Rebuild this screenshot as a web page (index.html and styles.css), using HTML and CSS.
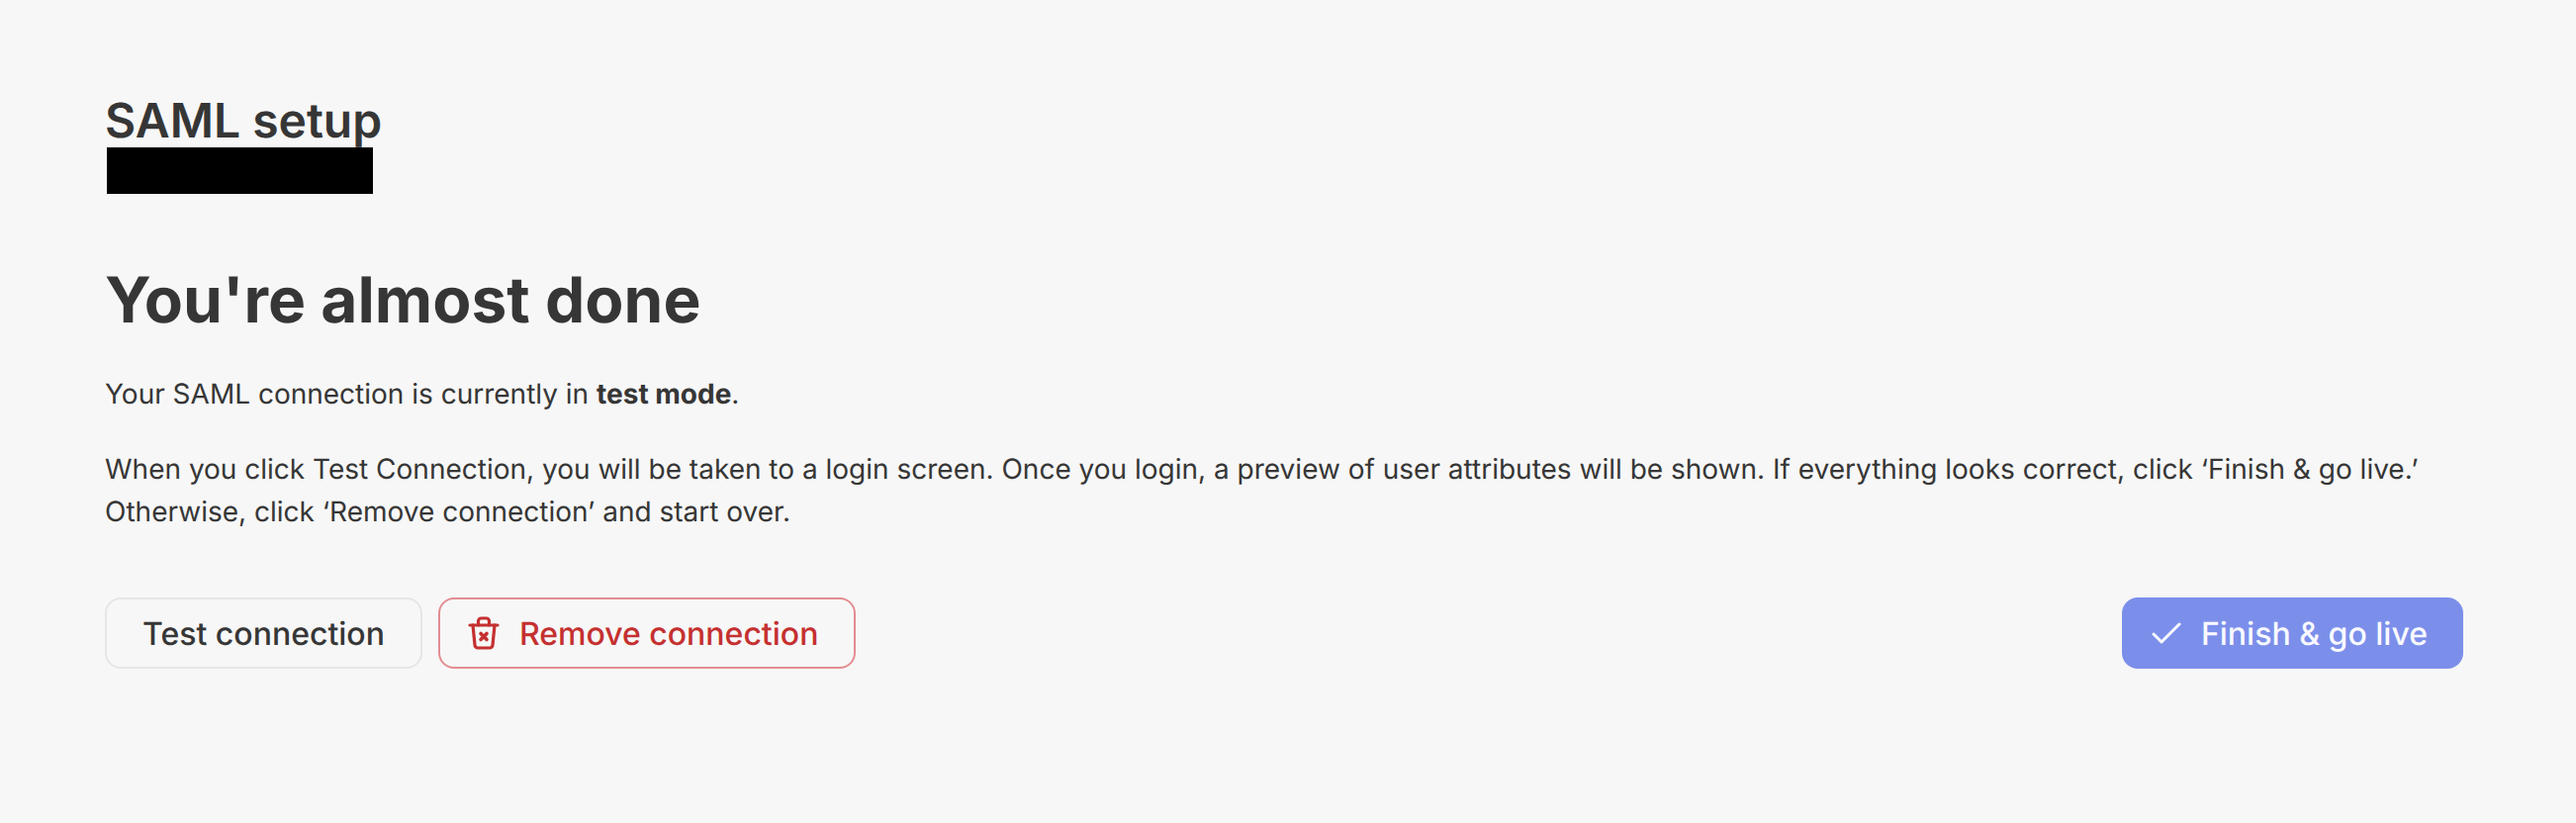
FILE: index.html
```html
<!DOCTYPE html>
<html lang="en">
<head>
<meta charset="utf-8">
<title>SAML setup</title>
<link rel="stylesheet" href="styles.css">
</head>
<body>
<main class="page">
  <header class="head">
    <div class="title">SAML setup</div>
    <div class="redacted"></div>
  </header>
  <h1 class="heading">You're almost done</h1>
  <p class="para first">Your SAML connection is currently in <strong>test mode</strong>.</p>
  <p class="para second">When you click Test Connection, you will be taken to a login screen. Once you login, a preview of user attributes will be shown. If everything looks correct, click ‘Finish &amp; go live.’ Otherwise, click ‘Remove connection’ and start over.</p>
  <div class="actions">
    <div class="left">
      <button class="btn neutral">Test connection</button>
      <button class="btn danger">
        <svg class="icon-trash" viewBox="0 0 32 36" fill="none" stroke="currentColor" stroke-width="3.2" stroke-linecap="round" stroke-linejoin="round"><path d="M2 10h28"/><path d="M5 10l2 20a3 3 0 0 0 3 3h12a3 3 0 0 0 3-3l2-20"/><path d="M10.5 10V6a3 3 0 0 1 3-3h5a3 3 0 0 1 3 3v4"/><path d="M13 18.5l6 6M19 18.5l-6 6" stroke-width="3.6"/></svg>
        Remove connection
      </button>
    </div>
    <button class="btn primary">
      <svg class="icon-check" viewBox="0 0 30 22" fill="none" stroke="currentColor" stroke-width="3" stroke-linecap="round" stroke-linejoin="round"><path d="M2 12l8 8L28 2"/></svg>
      Finish &amp; go live
    </button>
  </div>
</main>
</body>
</html>
```
FILE: styles.css
```css
html, body { margin: 0; height: 100%; }
body {
  background: #f7f7f7;
  color: #363636;
  font-family: "Inter", "Liberation Sans", sans-serif;
  text-rendering: geometricPrecision;
}
.page { padding: 94px 114px 0 106px; }
.title {
  font-size: 48px;
  font-weight: 600;
  line-height: 55px;
}
.redacted {
  position: relative;
  width: 269px;
  height: 47px;
  margin-left: 2px;
  background: #000;
}
.heading {
  margin: 68px 0 0;
  font-size: 64px;
  font-weight: 700;
  line-height: 80px;
}
.para {
  margin: 0;
  font-size: 28px;
  line-height: 43px;
}
.first { margin-top: 33px; }
.second { margin-top: 33px; }
.para strong { font-weight: 700; }
.actions {
  display: flex;
  justify-content: space-between;
  margin-top: 65px;
}
.left { display: flex; gap: 16px; }
.btn {
  display: flex;
  align-items: center;
  height: 72px;
  padding: 0 36px;
  border-radius: 16px;
  font-family: inherit;
  font-size: 32px;
  font-weight: 500;
  box-sizing: border-box;
  background: transparent;
  text-rendering: geometricPrecision;
}
.neutral { border: 2px solid #e6e6e6; color: #363636; }
.danger { border: 2px solid #e38d92; color: #c53030; padding-left: 28px; }
.primary { border: 0; background: #7b8fea; color: #f8f9ff; padding: 0 36px 0 30px; }
.icon-trash { width: 32px; height: 36px; margin-right: 20px; }
.icon-check { width: 30px; height: 22px; margin-right: 20px; }
```
